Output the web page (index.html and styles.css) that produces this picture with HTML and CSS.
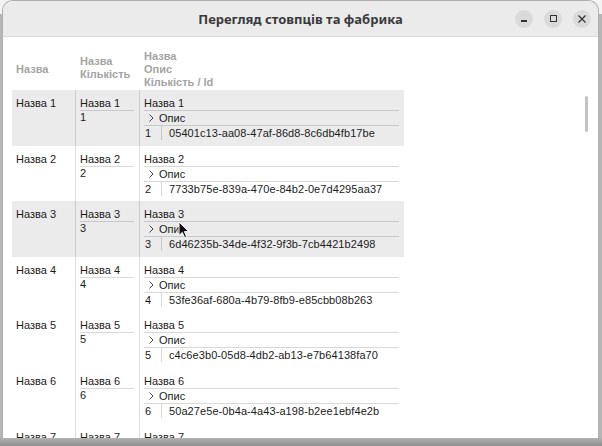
FILE: index.html
```html
<!DOCTYPE html>
<html lang="uk">
<head>
<meta charset="utf-8">
<title>Перегляд стовпців та фабрика</title>
<link rel="stylesheet" href="styles.css">
</head>
<body>
<div class="window">
  <div class="titlebar">
    <div class="title">Перегляд стовпців та фабрика</div>
    <div class="controls">
      <div class="btn"><span class="min"></span></div>
      <div class="btn"><span class="max"></span></div>
      <div class="btn"><svg width="8" height="8" viewBox="0 0 8 8"><path d="M0.5 0.5L7.5 7.5M7.5 0.5L0.5 7.5" stroke="#333" stroke-width="1.2" fill="none"/></svg></div>
    </div>
  </div>
  <div class="content">
    <div class="table">
      <div class="head">
        <div class="h">Назва</div>
        <div class="h h2">Назва<br>Кількість</div>
        <div class="h">Назва<br>Опис<br>Кількість / Id</div>
      </div>

      <div class="row sel">
        <div class="c">Назва 1</div>
        <div class="c c2"><div class="name">Назва 1</div><div class="qty">1</div></div>
        <div class="c c3">
          <div class="sub line">Назва 1</div>
          <div class="sub line desc"><svg class="chev" width="5" height="8" viewBox="0 0 5 8"><path d="M0.5 0.5L4 4L0.5 7.5" fill="none" stroke="#444" stroke-width="1"/></svg>Опис</div>
          <div class="sub ids"><span class="num">1</span><span class="uuid">05401c13-aa08-47af-86d8-8c6db4fb17be</span></div>
        </div>
      </div>

      <div class="row">
        <div class="c">Назва 2</div>
        <div class="c c2"><div class="name">Назва 2</div><div class="qty">2</div></div>
        <div class="c c3">
          <div class="sub line">Назва 2</div>
          <div class="sub line desc"><svg class="chev" width="5" height="8" viewBox="0 0 5 8"><path d="M0.5 0.5L4 4L0.5 7.5" fill="none" stroke="#444" stroke-width="1"/></svg>Опис</div>
          <div class="sub ids"><span class="num">2</span><span class="uuid">7733b75e-839a-470e-84b2-0e7d4295aa37</span></div>
        </div>
      </div>

      <div class="row sel">
        <div class="c">Назва 3</div>
        <div class="c c2"><div class="name">Назва 3</div><div class="qty">3</div></div>
        <div class="c c3">
          <div class="sub line">Назва 3</div>
          <div class="sub line desc"><svg class="chev" width="5" height="8" viewBox="0 0 5 8"><path d="M0.5 0.5L4 4L0.5 7.5" fill="none" stroke="#444" stroke-width="1"/></svg>Опис</div>
          <div class="sub ids"><span class="num">3</span><span class="uuid">6d46235b-34de-4f32-9f3b-7cb4421b2498</span></div>
        </div>
      </div>

      <div class="row">
        <div class="c">Назва 4</div>
        <div class="c c2"><div class="name">Назва 4</div><div class="qty">4</div></div>
        <div class="c c3">
          <div class="sub line">Назва 4</div>
          <div class="sub line desc"><svg class="chev" width="5" height="8" viewBox="0 0 5 8"><path d="M0.5 0.5L4 4L0.5 7.5" fill="none" stroke="#444" stroke-width="1"/></svg>Опис</div>
          <div class="sub ids"><span class="num">4</span><span class="uuid">53fe36af-680a-4b79-8fb9-e85cbb08b263</span></div>
        </div>
      </div>

      <div class="row">
        <div class="c">Назва 5</div>
        <div class="c c2"><div class="name">Назва 5</div><div class="qty">5</div></div>
        <div class="c c3">
          <div class="sub line">Назва 5</div>
          <div class="sub line desc"><svg class="chev" width="5" height="8" viewBox="0 0 5 8"><path d="M0.5 0.5L4 4L0.5 7.5" fill="none" stroke="#444" stroke-width="1"/></svg>Опис</div>
          <div class="sub ids"><span class="num">5</span><span class="uuid">c4c6e3b0-05d8-4db2-ab13-e7b64138fa70</span></div>
        </div>
      </div>

      <div class="row">
        <div class="c">Назва 6</div>
        <div class="c c2"><div class="name">Назва 6</div><div class="qty">6</div></div>
        <div class="c c3">
          <div class="sub line">Назва 6</div>
          <div class="sub line desc"><svg class="chev" width="5" height="8" viewBox="0 0 5 8"><path d="M0.5 0.5L4 4L0.5 7.5" fill="none" stroke="#444" stroke-width="1"/></svg>Опис</div>
          <div class="sub ids"><span class="num">6</span><span class="uuid">50a27e5e-0b4a-4a43-a198-b2ee1ebf4e2b</span></div>
        </div>
      </div>

      <div class="row">
        <div class="c">Назва 7</div>
        <div class="c c2"><div class="name">Назва 7</div><div class="qty">7</div></div>
        <div class="c c3">
          <div class="sub line">Назва 7</div>
          <div class="sub line desc"><svg class="chev" width="5" height="8" viewBox="0 0 5 8"><path d="M0.5 0.5L4 4L0.5 7.5" fill="none" stroke="#444" stroke-width="1"/></svg>Опис</div>
          <div class="sub ids"><span class="num">7</span><span class="uuid">9e1f0c42-7d3b-4a61-b5c8-2f6a8e0d4c19</span></div>
        </div>
      </div>
    </div>
    <div class="scroll"></div>
  </div>
</div>
<svg class="cursor" width="12" height="18" viewBox="0 0 12 18"><path d="M1 1L1 14.5L4.3 11.4L6.6 16.6L8.6 15.7L6.4 10.6L10.8 10.6Z" fill="#111" stroke="#fff" stroke-width="1"/></svg>
</body>
</html>
```
FILE: styles.css
```css
* { box-sizing: border-box; }
html, body { margin: 0; }
body {
  width: 602px;
  height: 446px;
  overflow: hidden;
  position: relative;
  font-family: "Liberation Sans", Arial, sans-serif;
  background: linear-gradient(to bottom, #f3f3f3 0, #f3f3f3 14px, #b6b6b6 14px, #b6b6b6 437px, #8e8e8e 446px);
}
.window {
  margin-left: 2px;
  width: 597px;
  height: 438px;
  border: 1px solid #b0b0b0;
  border-bottom: 0;
  border-radius: 11px 11px 0 0;
  overflow: hidden;
  background: #fff;
  display: flex;
  flex-direction: column;
}
.titlebar {
  flex: none;
  height: 36px;
  background: #ebebeb;
  border-bottom: 1px solid #d9d9d9;
  display: grid;
  grid-template-columns: 1fr auto 1fr;
  align-items: center;
}
.title {
  grid-column: 2;
  font-family: "Noto Sans", sans-serif;
  font-weight: 700;
  font-size: 13px;
  color: #3a3a3a;
}
.controls {
  grid-column: 3;
  justify-self: end;
  display: flex;
  gap: 11px;
  padding-right: 7px;
}
.btn {
  width: 18px;
  height: 18px;
  border-radius: 50%;
  background: #dadada;
  display: grid;
  place-items: center;
}
.min { width: 6px; height: 1.5px; background: #333; margin-top: 5px; }
.max { width: 7px; height: 7px; border: 1px solid #333; }
.content {
  flex: 1;
  position: relative;
  overflow: hidden;
  padding: 6px 0 0 9px;
}
.table { width: 392px; }
.head {
  display: grid;
  grid-template-columns: 64px 64px 264px;
  height: 47px;
}
.h {
  display: flex;
  flex-direction: column;
  justify-content: center;
  padding: 6px 4px 0;
  font-size: 11px;
  line-height: 13.3px;
  font-weight: 700;
  color: #a4a4a4;
}
.h2 { padding-bottom: 3px; }
.row {
  display: grid;
  grid-template-columns: 64px 64px 264px;
  height: 55.6px;
}
.row.sel { background: #ebebeb; }
.c {
  padding: 6px 5px 0 4px;
  border-right: 1px solid rgba(0, 0, 0, 0.13);
  font-size: 11px;
  line-height: 14px;
  color: #1c1c1c;
  white-space: nowrap;
}
.c3 { border-right: 0; }
.name { border-bottom: 1px solid rgba(0, 0, 0, 0.15); }
.qty { line-height: 12px; }
.sub { height: 14px; }
.sub.line { height: 15px; border-bottom: 1px solid rgba(0, 0, 0, 0.15); }
.desc { display: flex; align-items: center; }
.chev { margin: 0 5px 0 5px; flex: none; }
.ids { display: flex; }
.num {
  width: 18px;
  padding-left: 1px;
  border-right: 1px solid rgba(0, 0, 0, 0.15);
}
.uuid { padding-left: 7px; letter-spacing: 0.08px; }
.scroll {
  position: absolute;
  right: 10px;
  top: 59px;
  width: 3px;
  height: 36px;
  border-radius: 2px;
  background: #c3c3c3;
}
.cursor {
  position: absolute;
  left: 178px;
  top: 221px;
}
```
